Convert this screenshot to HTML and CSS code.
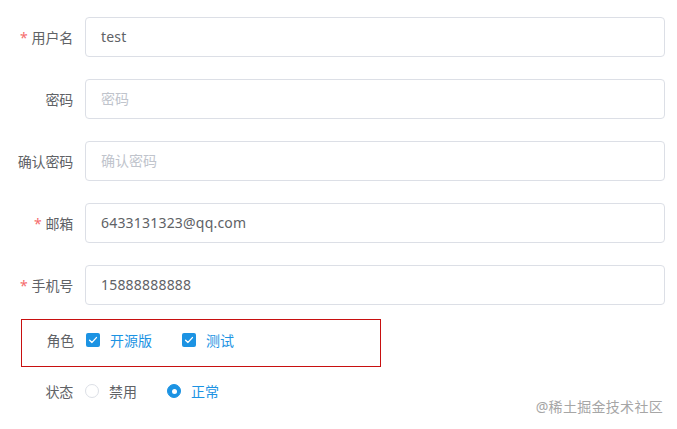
FILE: index.html
```html
<!DOCTYPE html>
<html lang="zh-CN">
<head>
<meta charset="utf-8">
<link rel="stylesheet" href="styles.css">
</head>
<body>
<form class="form">
  <div class="item">
    <label class="label"><span class="star">*</span>用户名</label>
    <div class="control"><div class="input">test</div></div>
  </div>
  <div class="item">
    <label class="label">密码</label>
    <div class="control"><div class="input placeholder">密码</div></div>
  </div>
  <div class="item">
    <label class="label">确认密码</label>
    <div class="control"><div class="input placeholder">确认密码</div></div>
  </div>
  <div class="item">
    <label class="label"><span class="star">*</span>邮箱</label>
    <div class="control"><div class="input">6433131323@qq.com</div></div>
  </div>
  <div class="item item-last">
    <label class="label"><span class="star">*</span>手机号</label>
    <div class="control"><div class="input">15888888888</div></div>
  </div>
  <div class="highlight">
    <div class="item item-plain">
      <label class="label label-inner">角色</label>
      <div class="options">
        <span class="option checked"><span class="checkbox"><svg viewBox="0 0 14 14" width="14" height="14"><path d="M3.6 7.2 L6 9.4 L10.4 4.6" fill="none" stroke="#fff" stroke-width="1.4" stroke-linecap="round" stroke-linejoin="round"/></svg></span><span class="opt-text">开源版</span></span>
        <span class="option checked"><span class="checkbox"><svg viewBox="0 0 14 14" width="14" height="14"><path d="M3.6 7.2 L6 9.4 L10.4 4.6" fill="none" stroke="#fff" stroke-width="1.4" stroke-linecap="round" stroke-linejoin="round"/></svg></span><span class="opt-text">测试</span></span>
      </div>
    </div>
  </div>
  <div class="item item-plain item-radio">
    <label class="label">状态</label>
    <div class="options">
      <span class="option"><span class="radio"></span><span class="opt-text">禁用</span></span>
      <span class="option checked"><span class="radio on"></span><span class="opt-text">正常</span></span>
    </div>
  </div>
</form>
<div class="watermark">@稀土掘金技术社区</div>
</body>
</html>
```

FILE: styles.css
```css
html, body {
  margin: 0;
  padding: 0;
  background: #fff;
}
body {
  width: 677px;
  height: 429px;
  position: relative;
  overflow: hidden;
  font-family: "Noto Sans", "Noto Sans CJK SC", sans-serif;
  font-size: 14px;
  color: #606266;
}
.form {
  padding: 17px 12px 0 0;
}
.item {
  display: flex;
  align-items: center;
  height: 40px;
  margin-bottom: 22px;
}
.item-last {
  margin-bottom: 14px;
}
.label {
  width: 85px;
  flex: none;
  box-sizing: border-box;
  padding-right: 12px;
  text-align: right;
  color: #606266;
  white-space: nowrap;
  letter-spacing: -0.2px;
}
.label-inner {
  width: 63px;
}
.star {
  color: #f56c6c;
  margin-right: 4px;
}
.control {
  flex: 1;
}
.input {
  box-sizing: border-box;
  height: 40px;
  line-height: 38px;
  border: 1px solid #dcdfe6;
  border-radius: 4px;
  padding: 0 15px;
  color: #606266;
  background: #fff;
  letter-spacing: 0.2px;
}
.placeholder {
  color: #c0c4cc;
  letter-spacing: 0;
}
.highlight {
  width: 360px;
  box-sizing: border-box;
  height: 48px;
  border: 1px solid #c81010;
  margin-left: 21px;
}
.highlight .item {
  margin: 0;
  margin-left: 1px;
}
.item-radio {
  margin-top: 4px;
}
.options {
  display: flex;
  align-items: center;
}
.option {
  display: inline-flex;
  align-items: center;
  margin-right: 30px;
  color: #606266;
}
.option.checked .opt-text {
  color: #1c93e3;
}
.checkbox {
  width: 14px;
  height: 14px;
  box-sizing: border-box;
  border-radius: 2px;
  background: #1c93e3;
  display: inline-flex;
  margin-right: 10px;
}
.radio {
  width: 14px;
  height: 14px;
  box-sizing: border-box;
  border-radius: 50%;
  border: 1px solid #dcdfe6;
  background: #fff;
  margin-right: 10px;
  display: inline-flex;
  align-items: center;
  justify-content: center;
}
.radio.on {
  border-color: #1c93e3;
  background: #1c93e3;
}
.radio.on::after {
  content: "";
  width: 5px;
  height: 5px;
  border-radius: 50%;
  background: #fff;
}
.watermark {
  position: absolute;
  right: 14px;
  top: 396px;
  font-size: 14px;
  color: #a6a6a6;
  letter-spacing: 0.3px;
}
```
